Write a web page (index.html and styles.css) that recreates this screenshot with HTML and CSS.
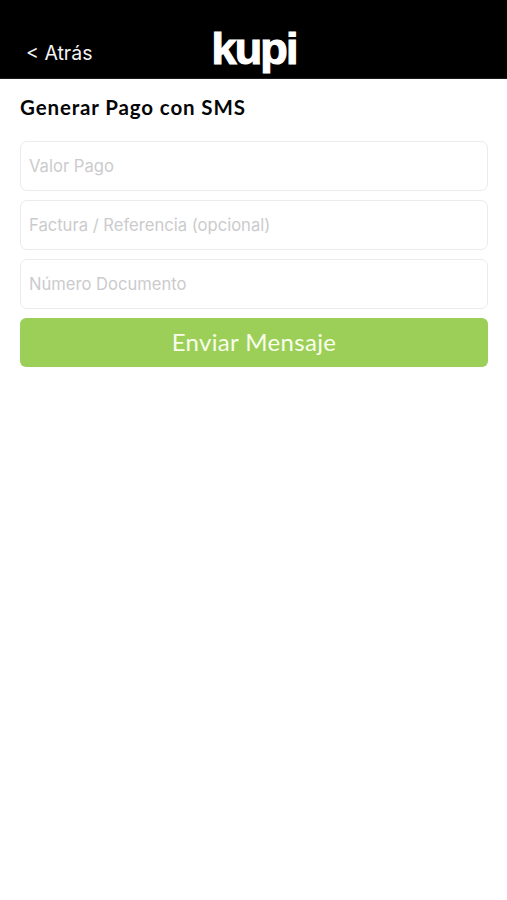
FILE: index.html
```html
<!DOCTYPE html>
<html lang="es">
<head>
<meta charset="utf-8">
<title>Kupi</title>
<link rel="stylesheet" href="styles.css">
</head>
<body>
<header class="topbar">
  <a class="back">&lt; Atrás</a>
  <svg class="logo" width="90" height="56" viewBox="0 0 90 56" role="img" aria-label="kupi">
    <text x="2.5" y="43" textLength="87" lengthAdjust="spacing">kupi</text>
  </svg>
</header>
<main class="content">
  <h1 class="title">Generar Pago con SMS</h1>
  <form class="form">
    <div class="field">Valor Pago</div>
    <div class="field">Factura / Referencia (opcional)</div>
    <div class="field">Número Documento</div>
    <button class="send" type="button">Enviar Mensaje</button>
  </form>
</main>
</body>
</html>
```
FILE: styles.css
```css
* { box-sizing: border-box; }
body { margin: 0; background: #fff; min-height: 900px; }
.topbar {
  display: grid;
  grid-template-columns: 1fr 90px 1fr;
  height: 79px;
  padding-top: 21px;
  background: #000;
  border-bottom: 1px solid #1c1c1c;
}
.back {
  padding: 20px 0 0 26px;
  font: 400 19.5px/24px Inter, sans-serif;
  color: #f4f4f4;
  white-space: nowrap;
}
.logo {
  display: block;
  overflow: visible;
  fill: #fff;
  stroke: #fff;
  stroke-width: 1.2;
  font: 700 45px "Liberation Sans", sans-serif;
}
.content { padding: 14px 19px 0 20px; }
.title {
  margin: 0;
  font: 700 20.5px/28px Lato, sans-serif;
  letter-spacing: .87px;
  color: #050505;
}
.form {
  display: flex;
  flex-direction: column;
  gap: 9px;
  margin-top: 20px;
}
.field {
  display: flex;
  align-items: center;
  height: 50px;
  padding: 0 8px;
  border: 1px solid #ebebeb;
  border-radius: 7px;
  font: 400 16.6px/24px Inter, sans-serif;
  color: #cbcbcd;
}
.send {
  height: 49px;
  padding: 0 0 2px;
  border: 0;
  border-radius: 6px;
  background: #9ccf58;
  color: #f8fdec;
  font: 400 24px/47px Lato, sans-serif;
  letter-spacing: .35px;
}
```
